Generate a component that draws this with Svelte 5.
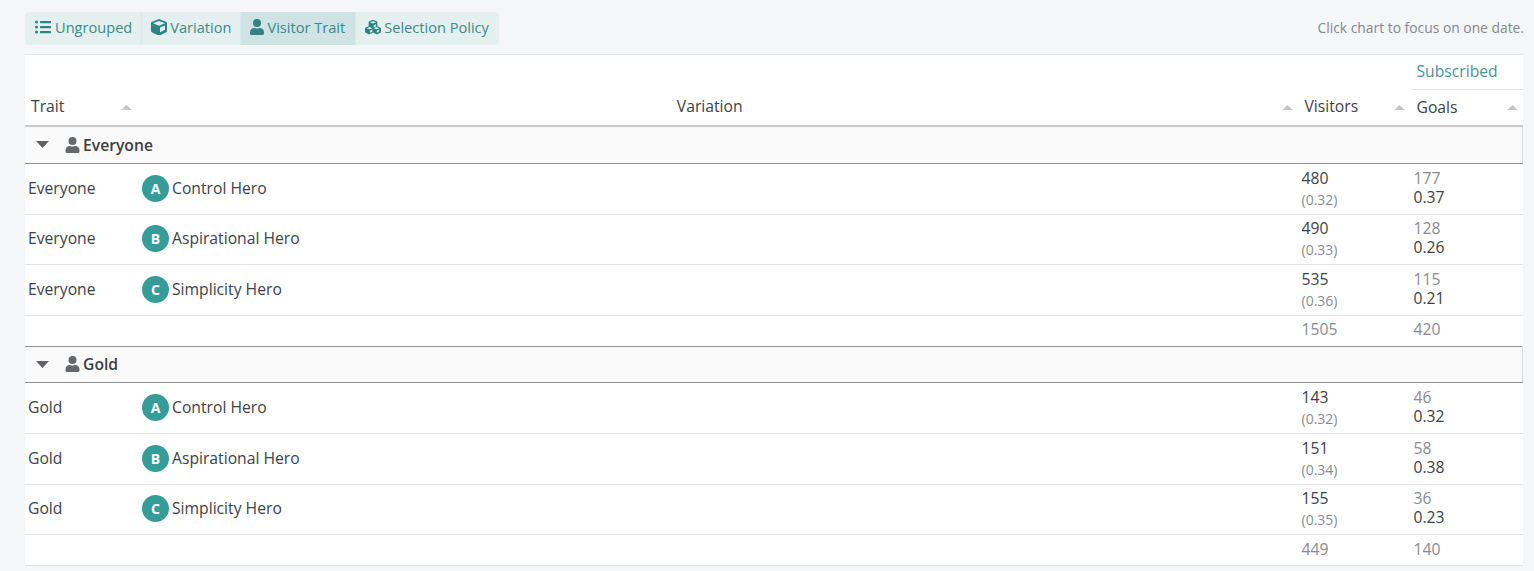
<script>
  const tabs = [
    { label: 'Ungrouped', icon: 'list' },
    { label: 'Variation', icon: 'cube' },
    { label: 'Visitor Trait', icon: 'user', active: true },
    { label: 'Selection Policy', icon: 'cubes' }
  ];

  const groups = [
    {
      name: 'Everyone',
      rows: [
        { letter: 'A', variation: 'Control Hero', visitors: 480, share: '0.32', goals: 177, rate: '0.37', h: 51 },
        { letter: 'B', variation: 'Aspirational Hero', visitors: 490, share: '0.33', goals: 128, rate: '0.26', h: 50 },
        { letter: 'C', variation: 'Simplicity Hero', visitors: 535, share: '0.36', goals: 115, rate: '0.21', h: 51 }
      ],
      visitors: 1505,
      goals: 420
    },
    {
      name: 'Gold',
      rows: [
        { letter: 'A', variation: 'Control Hero', visitors: 143, share: '0.32', goals: 46, rate: '0.32', h: 51 },
        { letter: 'B', variation: 'Aspirational Hero', visitors: 151, share: '0.34', goals: 58, rate: '0.38', h: 51 },
        { letter: 'C', variation: 'Simplicity Hero', visitors: 155, share: '0.35', goals: 36, rate: '0.23', h: 50 }
      ],
      visitors: 449,
      goals: 140
    }
  ];
</script>

{#snippet user(cls)}
  <svg class={cls} viewBox="0 0 448 512" aria-hidden="true"><path d="M224 256a128 128 0 1 0 0-256 128 128 0 0 0 0 256zm90 32h-17a174 174 0 0 1-146 0h-17C60 288 0 348 0 422v42c0 26 22 48 48 48h352c26 0 48-22 48-48v-42c0-74-60-134-134-134z"/></svg>
{/snippet}

{#snippet sortArrow()}
  <svg class="sort" viewBox="0 0 11 5" aria-hidden="true"><path d="M5.5 0 11 5H0z"/></svg>
{/snippet}

<div class="page">
  <div class="toolbar">
    <div class="tabs">
      {#each tabs as tab}
        <button class="tab" class:active={tab.active}>
          {#if tab.icon === 'list'}
            <svg class="ico" viewBox="0 0 512 512" aria-hidden="true"><path d="M48 48a48 48 0 1 0 0 96 48 48 0 0 0 0-96zm0 160a48 48 0 1 0 0 96 48 48 0 0 0 0-96zm0 160a48 48 0 1 0 0 96 48 48 0 0 0 0-96zM496 384H176c-9 0-16 7-16 16v40c0 9 7 16 16 16h320c9 0 16-7 16-16v-40c0-9-7-16-16-16zm0-320H176c-9 0-16 7-16 16v40c0 9 7 16 16 16h320c9 0 16-7 16-16V80c0-9-7-16-16-16zm0 160H176c-9 0-16 7-16 16v40c0 9 7 16 16 16h320c9 0 16-7 16-16v-40c0-9-7-16-16-16z"/></svg>
          {:else if tab.icon === 'cube'}
            <svg class="ico" viewBox="0 0 512 512" aria-hidden="true"><path d="M239 6 32 84c-19 7-32 25-32 45v254c0 18 10 35 27 43l207 104c14 7 30 7 44 0l207-104c17-8 27-25 27-43V129c0-20-13-38-32-45L273 6c-11-4-23-4-34 0zm17 60 192 72v1l-192 78-192-78v-1l192-72zm32 356V275l160-65v133l-160 79z"/></svg>
          {:else if tab.icon === 'user'}
            {@render user('ico narrow')}
          {:else}
            <svg class="ico" viewBox="0 0 512 512" aria-hidden="true"><path fill-rule="evenodd" d="M488 270l-92-35V100c0-14-9-26-22-31L278 33c-14-5-29-5-44 0l-96 36c-13 5-22 17-22 31v135l-92 35c-14 5-24 18-24 33v104c0 13 7 25 19 31l96 48c11 5 23 5 34 0l107-53 107 53c11 5 23 5 34 0l96-48c12-6 19-18 19-31V303c0-15-10-28-24-33zM352 240l-74 28v-70l74-30zM160 106l96-36 96 36-96 38zM236 400l-76 38v-66l76-34zm0-108-88 35-88-35 88-34zm216 108-76 38v-66l76-34zm0-108-88 35-88-35 88-34z"/></svg>
          {/if}
          <span>{tab.label}</span>
        </button>
      {/each}
    </div>
    <span class="hint">Click chart to focus on one date.</span>
  </div>

  <table>
    <colgroup>
      <col class="c-trait" />
      <col />
      <col class="c-num" />
      <col class="c-goal" />
    </colgroup>
    <thead>
      <tr class="head-top">
        <th colspan="3"></th>
        <th class="metric"><span>Subscribed</span></th>
      </tr>
      <tr class="head-main">
        <th class="h-trait"><span>Trait</span>{@render sortArrow()}</th>
        <th class="h-variation"><span>Variation</span>{@render sortArrow()}</th>
        <th class="h-visitors"><span>Visitors</span>{@render sortArrow()}</th>
        <th class="h-goals"><span>Goals</span>{@render sortArrow()}</th>
      </tr>
    </thead>
    {#each groups as group, i}
      <tbody>
        <tr class="group" class:first={i === 0}>
          <td colspan="4">
            <div class="group-label">
              <svg class="caret" viewBox="0 0 13 7" aria-hidden="true"><path d="M0 0h13L6.500 7z"/></svg>
              {@render user('group-ico')}
              <b>{group.name}</b>
            </div>
          </td>
        </tr>
        {#each group.rows as row}
          <tr class="row" class:short={row.h === 50} style:height="{row.h}px">
            <td class="trait">{group.name}</td>
            <td class="var-cell">
              <div class="variation">
                <span class="badge">{row.letter}</span>
                <span>{row.variation}</span>
              </div>
            </td>
            <td class="num">
              <div class="main">{row.visitors}</div>
              <div class="share">({row.share})</div>
            </td>
            <td class="goal">
              <div class="count">{row.goals}</div>
              <div class="rate">{row.rate}</div>
            </td>
          </tr>
        {/each}
        <tr class="total" class:last={i === groups.length - 1}>
          <td colspan="2"></td>
          <td class="num">{group.visitors}</td>
          <td class="goal">{group.goals}</td>
        </tr>
      </tbody>
    {/each}
  </table>
</div>

<style>
  :global(body) {
    background: #f4f6f8;
    font-family: "Open Sans", sans-serif;
    color: #3c4248;
  }

  .page {
    padding: 12px 10px 0 25px;
    height: 559px;
    overflow: hidden;
    font-size: 15.7px;
  }

  .toolbar {
    display: flex;
    align-items: center;
    justify-content: space-between;
    height: 33px;
    margin-bottom: 9px;
  }

  .tabs {
    display: flex;
    height: 33px;
    border-radius: 4px;
    overflow: hidden;
  }

  .tab {
    display: flex;
    align-items: center;
    gap: 3px;
    padding: 0 9px 4px 9px;
    border: 0;
    border-right: 1px solid #d9e8e8;
    background: #e4f0f0;
    color: #3c8a8a;
    font: inherit;
    font-size: 14.6px;
  }

  .tab:first-child {
    padding-left: 10px;
    gap: 4px;
  }

  .tab:last-child {
    border-right: 0;
    padding-right: 10px;
  }

  .tab.active {
    background: #cfe3e5;
    padding-right: 10px;
  }

  .ico {
    width: 16px;
    height: 16px;
    fill: #2f8482;
    flex: none;
  }

  :global(.ico.narrow) {
    width: 14px;
  }

  .hint {
    color: #84898f;
    font-size: 13.85px;
    padding-bottom: 2px;
    white-space: nowrap;
  }

  table {
    width: 1498px;
    table-layout: fixed;
    border-collapse: collapse;
    background: #fff;
    border-top: 1px solid #e2e4e6;
  }

  .c-trait { width: 112px; }
  .c-num { width: 113px; }
  .c-goal { width: 112px; }

  th {
    font-weight: 400;
    padding: 0;
  }

  .head-top {
    height: 35px;
  }

  .metric {
    text-align: left;
    padding: 0 0 2px 6px;
    color: #4a9391;
    border-bottom: 1px solid #e2e4e6;
  }

  .head-main {
    height: 36px;
    border-bottom: 2px solid #c8cacc;
  }

  .head-main th {
    position: relative;
    text-align: left;
    padding: 0 0 2px 6px;
  }

  .h-variation {
    text-align: center !important;
    padding-right: 21px !important;
  }

  .h-visitors {
    padding-left: 7px !important;
  }

  .h-goals {
    padding-top: 1px !important;
  }

  .sort {
    position: absolute;
    top: 15px;
    right: 5px;
    width: 11px;
    height: 5px;
    fill: #c4c6c8;
  }

  .h-visitors .sort {
    right: 6px;
  }

  .group {
    height: 36px;
    background: #fafafa;
    border-top: 1px solid #8e9194;
    border-bottom: 1px solid #8e9194;
    border-right: 1px solid #d8d8d8;
  }

  .group.first {
    border-top: 0;
    height: 38px;
  }

  .group td {
    padding: 0 0 1px;
  }

  .group.first td {
    padding: 0;
  }

  .group-label {
    display: flex;
    align-items: center;
    padding-left: 11px;
  }

  .group-label b {
    font-weight: 600;
    color: #3a3f44;
    margin-left: 3px;
  }

  .caret {
    width: 13px;
    height: 7px;
    fill: #5f6367;
    margin-right: 16px;
  }

  .group-ico {
    width: 15px;
    height: 16px;
    fill: #65686b;
  }

  .row {
    border-bottom: 1px solid #e3e5e7;
  }

  .row td {
    padding: 0;
  }

  .row .trait {
    padding: 0 0 2px 3px;
  }

  .row .var-cell {
    padding-bottom: 2px;
  }

  .row.short .trait,
  .row.short .var-cell {
    padding-bottom: 3px;
  }

  .variation {
    display: flex;
    align-items: center;
    gap: 3px;
  }

  .badge {
    display: flex;
    align-items: center;
    justify-content: center;
    width: 27px;
    height: 27px;
    margin-left: 5px;
    border-radius: 50%;
    background: #369c98;
    color: #fff;
    font-size: 14px;
    font-weight: 700;
  }

  .row .num {
    padding: 1px 0 0 4px;
    vertical-align: middle;
  }

  .row .goal {
    padding-left: 3px;
    vertical-align: middle;
  }

  .main {
    line-height: 20px;
  }

  .count {
    line-height: 19px;
    color: #888c91;
  }

  .share {
    font-size: 14px;
    line-height: 24px;
    color: #888c91;
  }

  .rate {
    line-height: 19px;
    margin-bottom: 3px;
  }

  .total {
    height: 31px;
  }

  .total.last {
    border-bottom: 1px solid #dfe3e4;
  }

  .total td {
    color: #888c91;
    padding: 0 0 4px;
  }

  .total.last td {
    padding-bottom: 2px;
  }

  .total .num {
    padding-left: 4px;
  }

  .total .goal {
    padding-left: 3px;
  }
</style>
